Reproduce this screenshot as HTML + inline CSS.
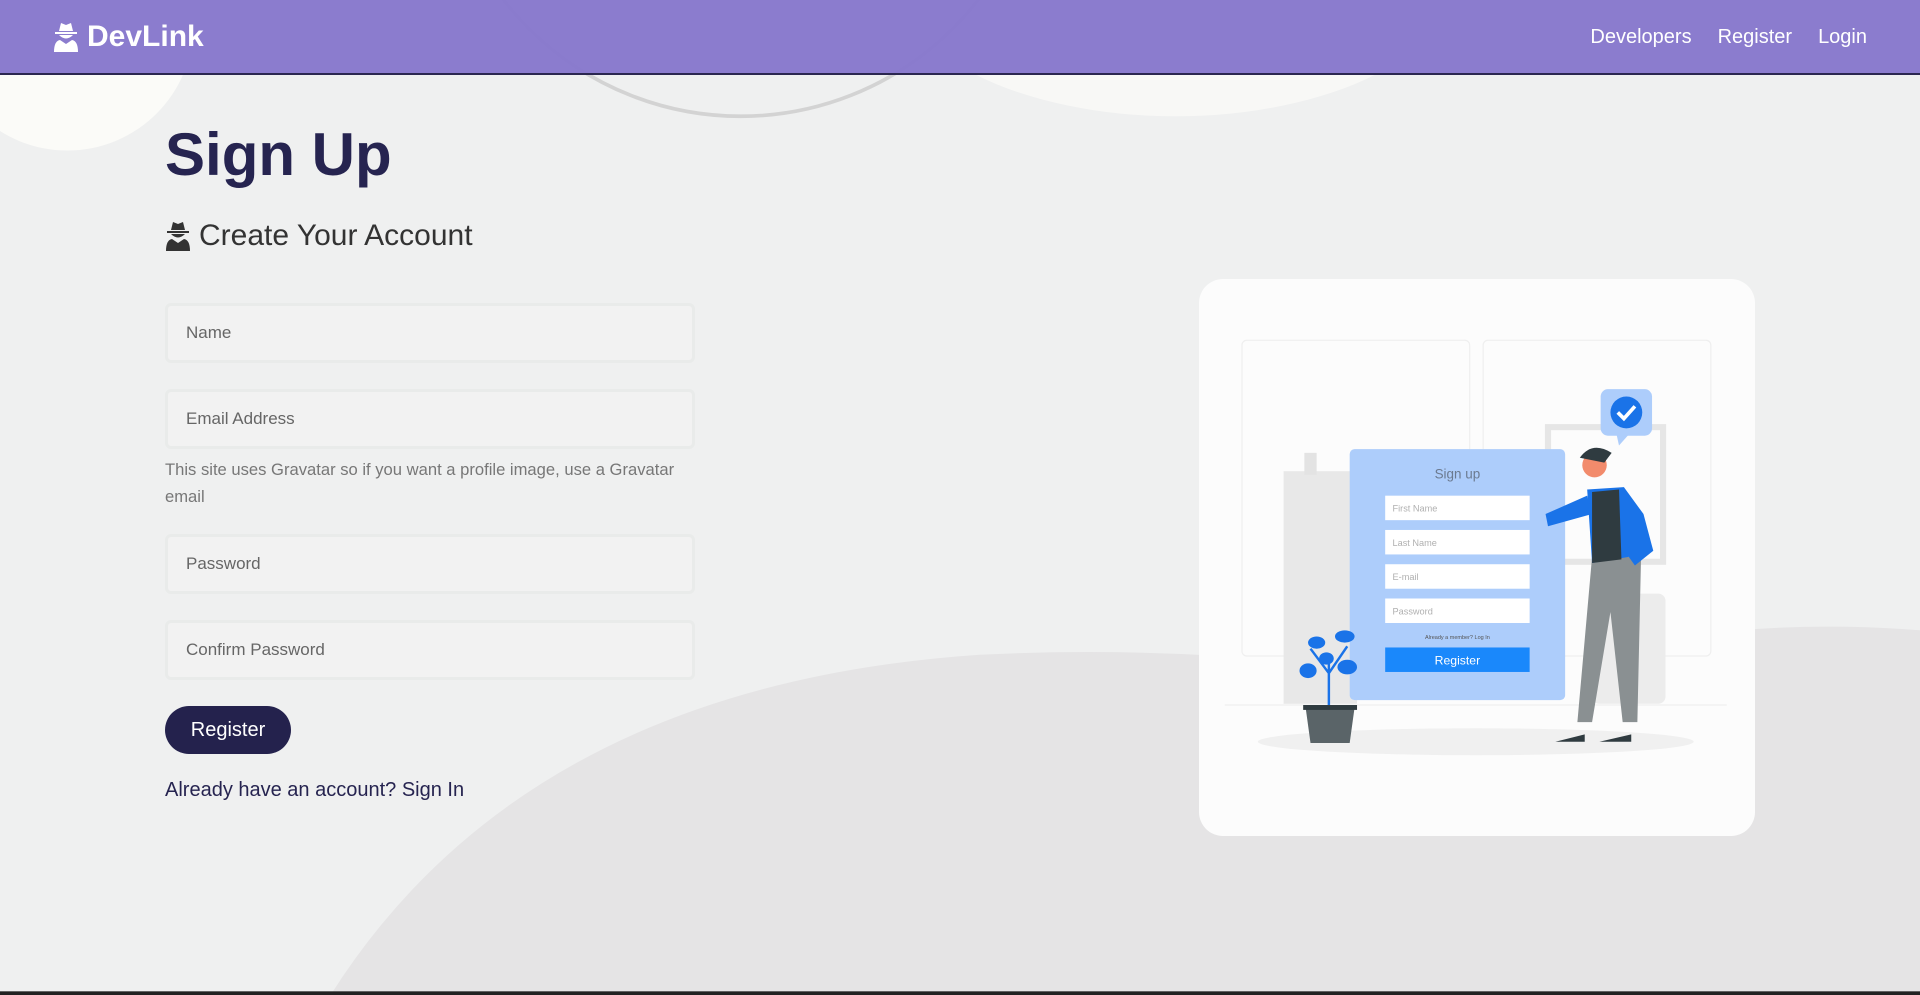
<!DOCTYPE html>
<html><head><meta charset="utf-8"><style>
*{margin:0;padding:0;box-sizing:border-box}
html,body{width:1920px;height:995px;overflow:hidden}
body{font-family:"Liberation Sans",Arial,sans-serif;background:#eff0f0;position:relative}
svg{display:block}
#bg{position:absolute;left:0;top:0}
nav{position:absolute;left:0;top:0;width:1920px;height:75px;background:rgba(137,121,205,0.98);border-bottom:2px solid #2b2750;}
.logo{position:absolute;left:53px;top:20px;color:#fff;font-weight:bold;font-size:30px;display:flex;align-items:center;gap:8px}
.links{position:absolute;right:53px;top:26px;color:#fff;font-size:20px}
.links span{margin-left:26px}
h1{position:absolute;left:165px;top:120px;font-size:60px;font-weight:bold;color:#262450}
.sub{position:absolute;left:165px;top:219px;font-size:30px;color:#333;display:flex;align-items:center;gap:8px}
.inp{position:absolute;left:165px;width:530px;height:60px;background:#f2f2f2;border:3px solid #e9ebea;border-radius:6px;color:#666;font-size:17px;padding-left:18px;line-height:54px}
.help{position:absolute;left:165px;top:456px;width:540px;font-size:16.6px;line-height:27px;color:#777}
.btn{position:absolute;left:165px;top:706px;width:126px;height:48px;border-radius:24px;background:#24224d;color:#fff;font-size:20px;text-align:center;line-height:48px}
.al{position:absolute;left:165px;top:779px;font-size:20px;color:#262450}
.card{position:absolute;left:1199px;top:279px;width:556px;height:557px;border-radius:24px;background:#fcfcfc;overflow:hidden}
</style></head><body>
<svg id="bg" width="1920" height="995" viewBox="0 0 1568 813" preserveAspectRatio="none">
<rect width="1568" height="813" fill="#eff0f0"/>
<ellipse cx="960" cy="-20" rx="230" ry="115" fill="#f8f8f6"/>
<circle cx="55" cy="20" r="103" fill="#fbfbf8"/>
<circle cx="605" cy="-150" r="245" fill="none" stroke="#d3d3d3" stroke-width="3"/>
<path d="M270 813 Q430 560 800 535 Q1000 525 1200 560 Q1380 500 1568 515 L1568 813Z" fill="#e5e4e5"/>
<rect y="810" width="1568" height="3" fill="#222"/>
</svg>
<nav>
<div class="logo"><svg width="26" height="30" viewBox="0 0 26 30"><path d="M6 9 L8 1 L13 3 L18 1 L20 9 Z M2 10 H24 V12 H2Z M6 13 Q13 20 20 13 Z M1 30 Q1 19 7 18 L13 22 L19 18 Q25 19 25 30 Z" fill="#fff"/></svg>DevLink</div>
<div class="links"><span>Developers</span><span>Register</span><span>Login</span></div>
</nav>
<h1>Sign Up</h1>
<div class="sub"><svg width="26" height="30" viewBox="0 0 26 30"><path d="M6 9 L8 1 L13 3 L18 1 L20 9 Z M2 10 H24 V12 H2Z M6 13 Q13 20 20 13 Z M1 30 Q1 19 7 18 L13 22 L19 18 Q25 19 25 30 Z" fill="#333"/></svg>Create Your Account</div>
<div class="inp" style="top:303px">Name</div>
<div class="inp" style="top:389px">Email Address</div>
<div class="help">This site uses Gravatar so if you want a profile image, use a Gravatar email</div>
<div class="inp" style="top:534px">Password</div>
<div class="inp" style="top:620px">Confirm Password</div>
<div class="btn">Register</div>
<div class="al">Already have an account? Sign In</div>
<div class="card"><svg width="556" height="557" viewBox="979 228 454 455">
<rect x="1014" y="278" width="186" height="258" rx="4" fill="none" stroke="#efefef"/>
<rect x="1211" y="278" width="186" height="258" rx="4" fill="none" stroke="#efefef"/>
<rect x="1264" y="349" width="94" height="110" fill="none" stroke="#e6e6e6" stroke-width="5"/>
<rect x="1048" y="385" width="60" height="190" fill="#e8e8e8"/>
<rect x="1065" y="370" width="10" height="18" fill="#e3e3e3"/>
<rect x="1300" y="485" width="60" height="90" rx="6" fill="#ececec"/>
<line x1="1000" y1="576" x2="1410" y2="576" stroke="#eeeeee"/>
<ellipse cx="1205" cy="606" rx="178" ry="11" fill="#f0f0f0"/>
<rect x="1102" y="367" width="176" height="205" rx="4" fill="#adcdfb"/>
<text x="1190" y="391" font-size="11" fill="#6b7a90" text-anchor="middle" font-family="Liberation Sans,sans-serif">Sign up</text>
<g font-size="7.5" fill="#b0b0b0" font-family="Liberation Sans,sans-serif">
<rect x="1131" y="405" width="118" height="20" fill="#fff"/><text x="1137" y="418">First Name</text>
<rect x="1131" y="433" width="118" height="20" fill="#fff"/><text x="1137" y="446">Last Name</text>
<rect x="1131" y="461" width="118" height="20" fill="#fff"/><text x="1137" y="474">E-mail</text>
<rect x="1131" y="489" width="118" height="20" fill="#fff"/><text x="1137" y="502">Password</text>
</g>
<text x="1190" y="522" font-size="4.5" fill="#555" text-anchor="middle" font-family="Liberation Sans,sans-serif">Already a member? Log In</text>
<rect x="1131" y="529" width="118" height="20" fill="#1a88fb"/>
<text x="1190" y="543" font-size="10" fill="#fff" text-anchor="middle" font-family="Liberation Sans,sans-serif">Register</text>
<rect x="1307" y="318" width="42" height="38" rx="6" fill="#adcdfb"/>
<path d="M1320 355 L1322 364 L1330 355Z" fill="#adcdfb"/>
<circle cx="1328" cy="337" r="13" fill="#1a73e8"/>
<path d="M1321 337 L1326 342 L1335 332" stroke="#fff" stroke-width="3" fill="none"/>
<path d="M1066 578 H1106 L1102 607 H1070Z" fill="#5a6468"/>
<rect x="1064" y="576" width="44" height="4" fill="#2f3b40"/>
<path d="M1085 576 V535 M1085 550 L1070 530 M1085 550 L1100 528" stroke="#1a73e8" stroke-width="2" fill="none"/>
<g fill="#1a73e8"><ellipse cx="1075" cy="525" rx="7" ry="5"/><ellipse cx="1098" cy="520" rx="8" ry="5"/><ellipse cx="1068" cy="548" rx="7" ry="6"/><ellipse cx="1100" cy="545" rx="8" ry="6"/><ellipse cx="1083" cy="538" rx="6" ry="5"/></g>
<path d="M1300 455 L1340 455 L1337 590 L1325 590 L1315 500 L1300 590 L1288 590Z" fill="#8a9092"/>
<path d="M1296 400 L1326 398 L1342 420 L1350 450 L1335 462 L1330 455 L1300 460 Z" fill="#1a73e8"/>
<path d="M1300 402 L1322 400 L1324 457 L1300 460Z" fill="#2f3b40"/>
<path d="M1296 405 L1262 420 L1264 430 L1300 420Z" fill="#1a73e8"/>
<circle cx="1302" cy="380" r="10" fill="#f28b6c"/>
<path d="M1290 374 Q1300 360 1316 370 L1310 378 Z" fill="#2f3b40"/>
<path d="M1270 606 L1294 600 L1294 606Z M1306 606 L1332 600 L1332 606Z" fill="#2f3b40"/>
</svg></div>
</body></html>
